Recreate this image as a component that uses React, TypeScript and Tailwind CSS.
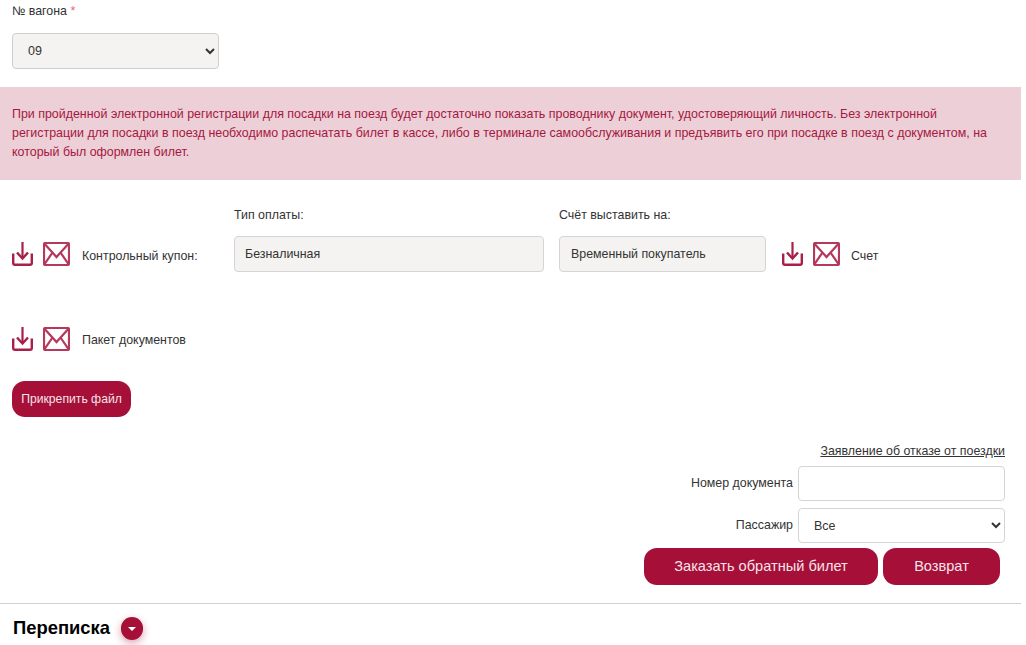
const FONT = { fontFamily: '"Liberation Sans", Arial, sans-serif' };

function DownloadIcon() {
  return (
    <svg width="21" height="24" viewBox="0 0 21 24" fill="none" stroke="#a81f47" strokeWidth="2">
      <path d="M10.5 0V16" strokeWidth="2.2" />
      <path d="M5 10.5L10.5 16.5L16 10.5" strokeWidth="2.4" />
      <path d="M1.2 11.5V21a1.8 1.8 0 0 0 1.8 1.8h15a1.8 1.8 0 0 0 1.8-1.8V11.5" strokeWidth="2.4" />
    </svg>
  );
}

function MailIcon() {
  return (
    <svg width="27" height="24" viewBox="0 0 27 24" fill="none" stroke="#b5395b" strokeWidth="2.2">
      <rect x="1" y="1" width="25" height="22" rx="1.5" />
      <path d="M1.5 1.8L13.5 15L25.5 1.8" />
      <path d="M1.5 22.2L9.5 10.5M25.5 22.2L17.5 10.5" />
    </svg>
  );
}

function DocActions() {
  return (
    <div className="flex items-center gap-[10px]">
      <DownloadIcon />
      <MailIcon />
    </div>
  );
}

export default function App() {
  return (
    <div className="h-[645px] w-[1021px] overflow-hidden bg-white text-[12.4px] text-[#333]" style={FONT}>
      <div className="px-3 pt-[3px]">
        <div className="h-4 leading-4">
          № вагона <span className="text-[#e8697f]">*</span>
        </div>
        <select className="mt-[14px] block h-9 w-[207px] rounded border border-[#cfcfcf] bg-[#f4f3f1] pl-[11px] text-[12.5px] text-[#333]" defaultValue="09">
          <option value="09">09</option>
        </select>
      </div>

      <div className="mt-[18px] h-[93px] bg-[#eccfd7] px-3 pt-[18px] text-[12.43px] leading-[19px] text-[#a6183f]">
        При пройденной электронной регистрации для посадки на поезд будет достаточно показать проводнику документ, удостоверяющий личность. Без электронной
        <br />
        регистрации для посадки в поезд необходимо распечатать билет в кассе, либо в терминале самообслуживания и предъявить его при посадке в поезд с документом, на
        <br />
        который был оформлен билет.
      </div>

      <div className="flex px-3 pt-[27px]">
        <div className="flex h-[62px] w-[222px] items-center pt-[32px]">
          <DocActions />
          <span className="mt-[5px] ml-3">Контрольный купон:</span>
        </div>
        <div className="w-[310px]">
          <div className="h-4 leading-4">Тип оплаты:</div>
          <div className="mt-[13px] flex h-9 items-center rounded border border-[#d5d5d5] bg-[#f4f3f1] pl-[10px]">Безналичная</div>
        </div>
        <div className="ml-[15px] w-[207px]">
          <div className="h-4 leading-4">Счёт выставить на:</div>
          <div className="mt-[13px] flex h-9 items-center rounded border border-[#d5d5d5] bg-[#f4f3f1] pl-[11px]">Временный покупатель</div>
        </div>
        <div className="ml-[16px] flex h-[62px] items-center pt-[32px]">
          <DocActions />
          <span className="mt-[5px] ml-[11px]">Счет</span>
        </div>
      </div>

      <div className="flex items-center px-3 pt-[55px]">
        <DocActions />
        <span className="mt-[2px] ml-3">Пакет документов</span>
      </div>

      <div className="px-3 pt-[30px]">
        <button className="h-[36px] w-[119px] rounded-[13px] bg-[#a50f38] text-[12.2px] text-[#f6e4e9]">Прикрепить файл</button>
      </div>

      <div className="flex flex-col items-end pt-[26px] pr-4">
        <a className="h-4 leading-4 underline">Заявление об отказе от поездки</a>
        <div className="mt-[7px] flex items-center gap-[5px]">
          <span>Номер документа</span>
          <input className="h-[35px] w-[207px] rounded border border-[#d5d5d5] bg-white" />
        </div>
        <div className="mt-[7px] flex items-center gap-[5px]">
          <span>Пассажир</span>
          <select className="h-[35px] w-[207px] rounded border border-[#d5d5d5] bg-white pl-[11px] text-[12.5px] text-[#333]" defaultValue="all">
            <option value="all">Все</option>
          </select>
        </div>
        <div className="mt-[5px] mr-[5px] flex gap-[5px]">
          <button className="h-[37px] w-[234px] rounded-[13px] bg-[#a50f38] text-[14.6px] text-[#f6e4e9]">Заказать обратный билет</button>
          <button className="h-[37px] w-[117px] rounded-[13px] bg-[#a50f38] text-[14.6px] text-[#f6e4e9]">Возврат</button>
        </div>
      </div>

      <div className="mt-[18px] flex items-center border-t border-[#d0d0d0] pt-3 pl-[13px]">
        <h2 className="text-[18.4px] leading-[24px] font-bold text-black">Переписка</h2>
        <div className="ml-[11px] flex h-[23px] w-[22px] items-center justify-center rounded-full bg-[#a50f38] shadow-[0_3px_8px_rgba(165,15,56,0.4)]">
          <div className="mt-[2px] border-x-[4px] border-t-[4px] border-x-transparent border-t-white" />
        </div>
      </div>
    </div>
  );
}
